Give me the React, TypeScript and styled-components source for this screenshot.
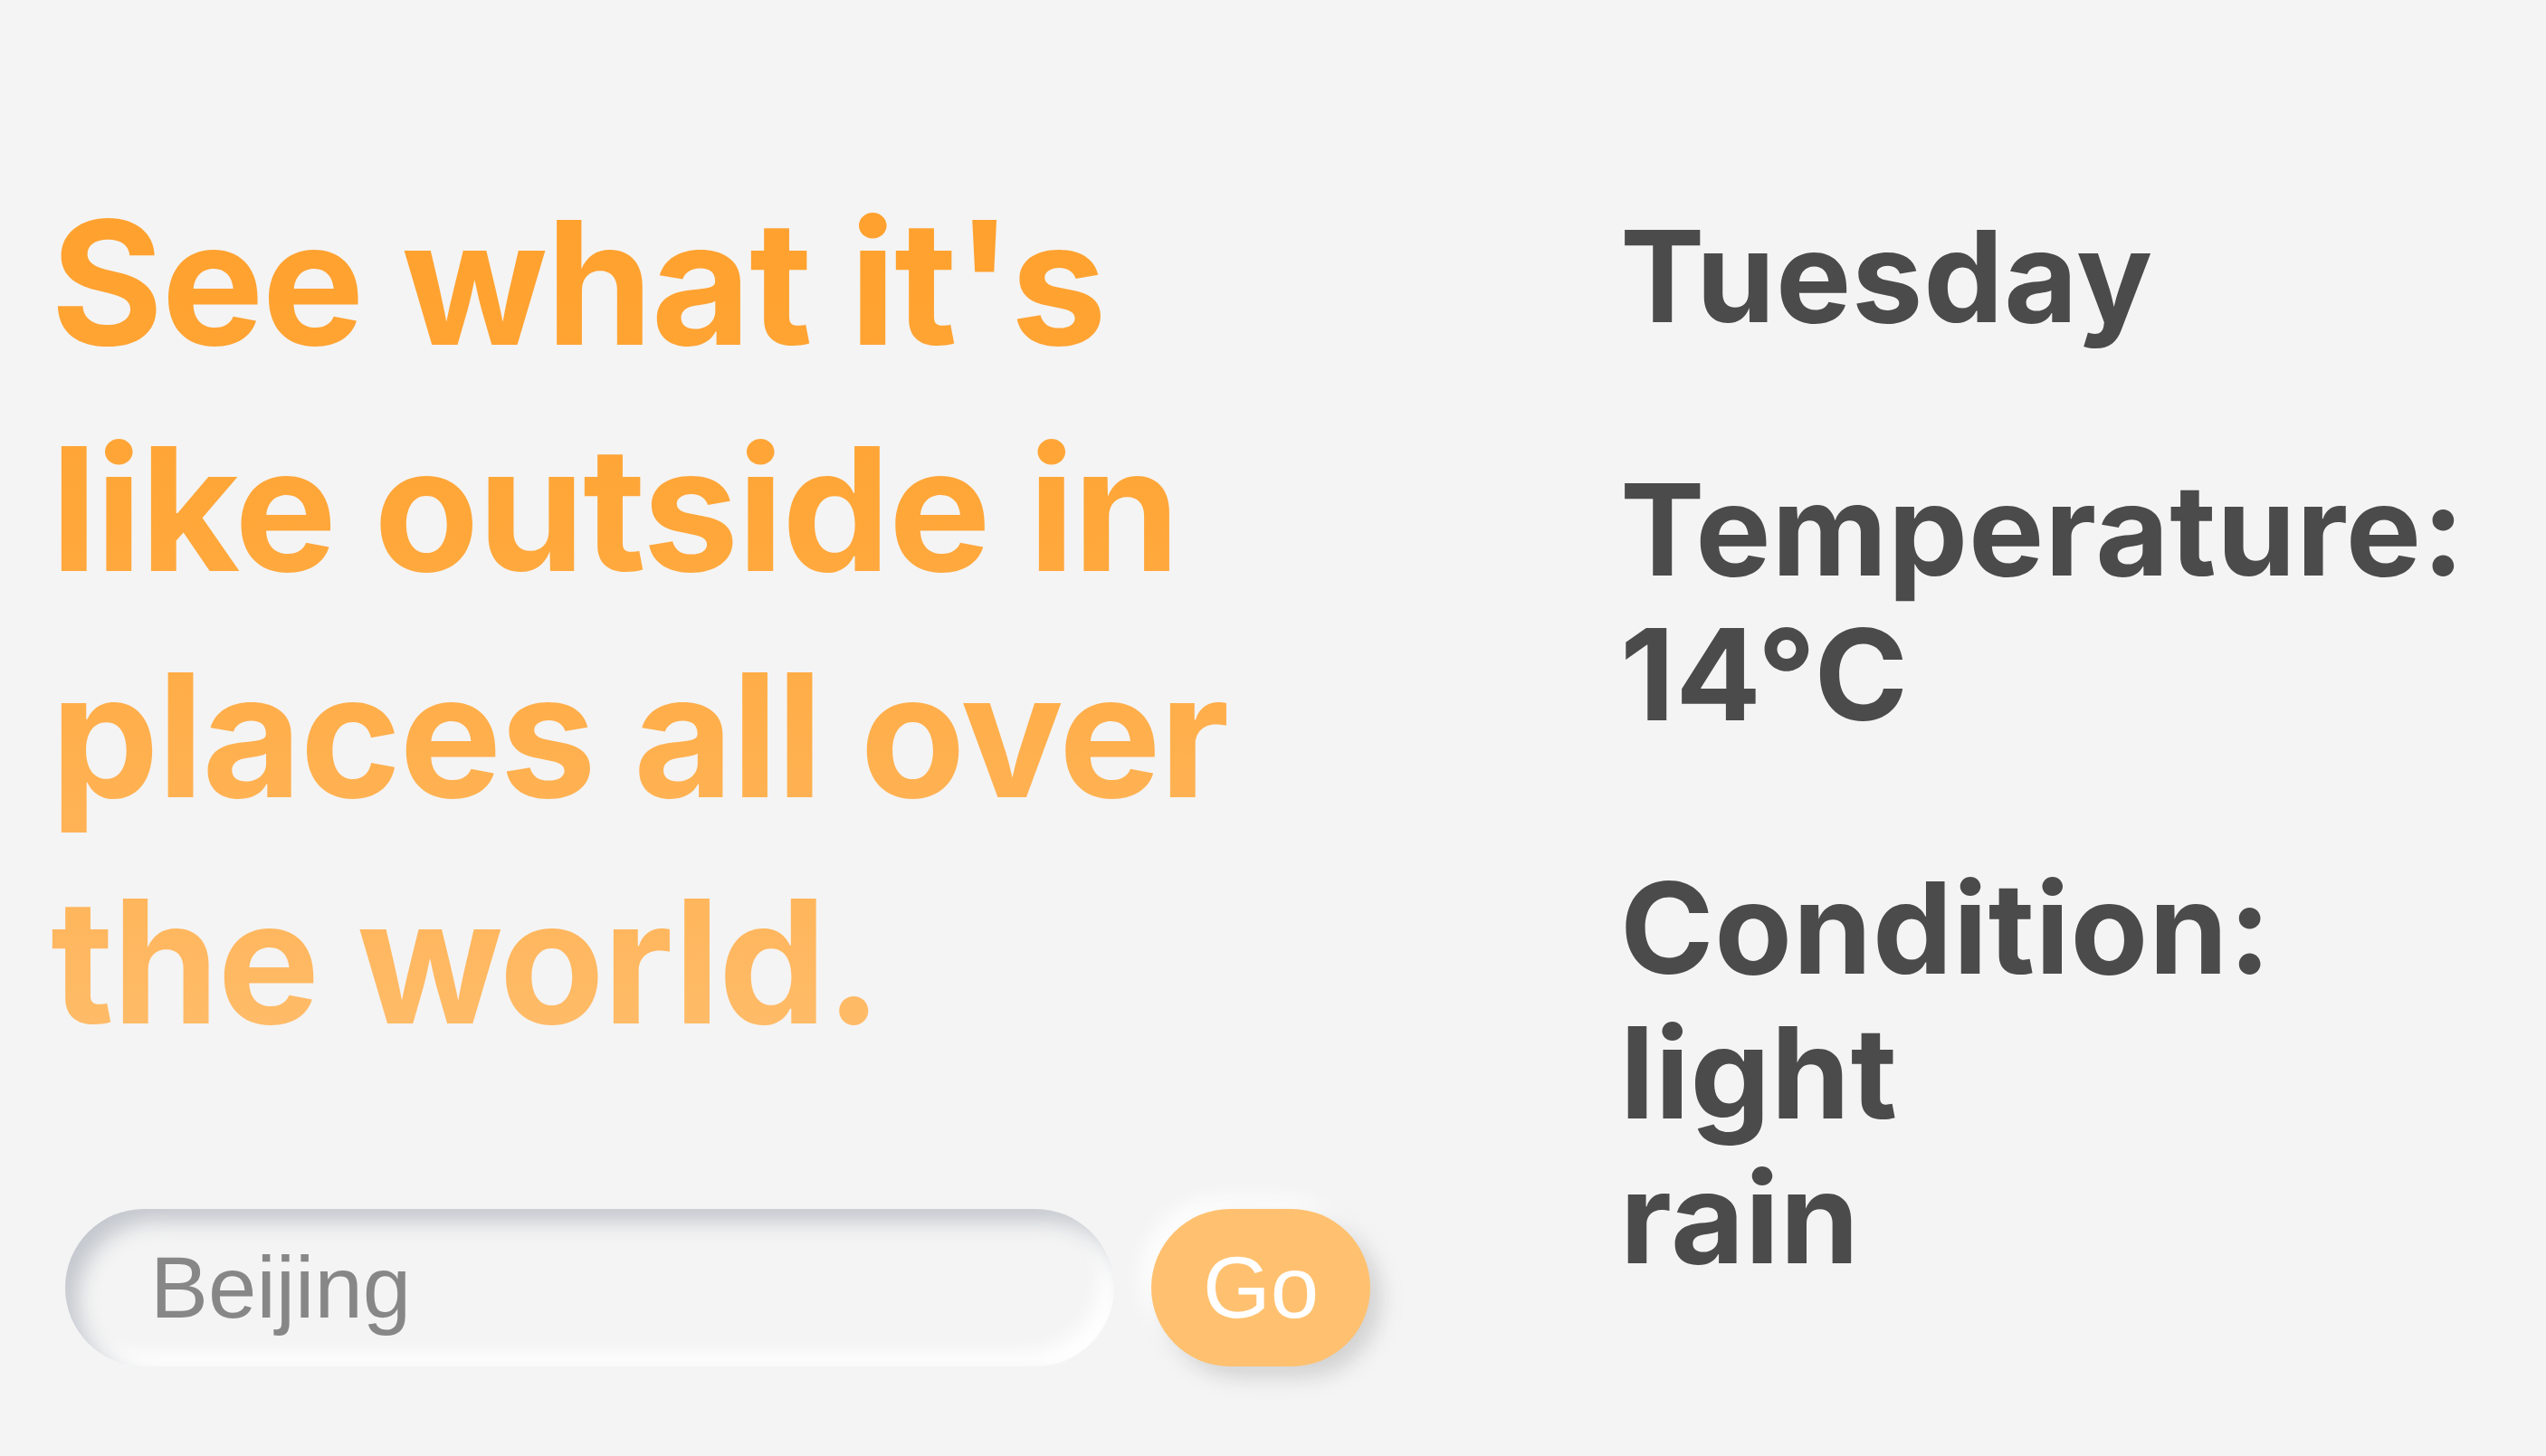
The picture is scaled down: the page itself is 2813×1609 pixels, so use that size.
import React, { useEffect, useRef } from "react";
import styled, { createGlobalStyle } from "styled-components";

const GlobalStyle = createGlobalStyle`
  html, body {
    margin: 0;
    padding: 0;
    background: #f4f4f4;
  }
  body {
    font-family: Inter, "Liberation Sans", sans-serif;
  }
  * { box-sizing: border-box; }
`;

const Page = styled.main`
  display: grid;
  grid-template-columns: 1790px 1fr;
  min-height: 1609px;
  background: #f4f4f4;
`;

const LeftColumn = styled.section`
  padding: 187px 0 0 56px;
  display: flex;
  flex-direction: column;
`;

const Headline = styled.h1`
  margin: 0;
  font-family: Inter, "Liberation Sans", sans-serif;
  font-weight: 700;
  font-size: 190px;
  line-height: 250px;
  letter-spacing: -2px;
  white-space: nowrap;
  background: linear-gradient(180deg, #ffa02c 0%, #ffa73a 40%, #ffbd6c 100%);
  -webkit-background-clip: text;
  background-clip: text;
  color: transparent;
  align-self: flex-start;
`;

const SearchForm = styled.form`
  display: flex;
  align-items: center;
  gap: 41px;
  margin: 149px 0 0 16px;
`;

const CityInput = styled.input`
  width: 1159px;
  height: 174px;
  border: none;
  outline: none;
  border-radius: 87px;
  background: #f4f4f4;
  padding: 0 0 0 94px;
  font-family: "Liberation Sans", Arial, sans-serif;
  font-size: 96px;
  color: #878787;
  caret-color: #666;
  box-shadow: inset 14px 14px 22px rgba(180, 186, 194, 0.75),
    inset -14px -14px 22px rgba(255, 255, 255, 1);
`;

const GoButton = styled.button`
  width: 242px;
  height: 174px;
  border: none;
  border-radius: 87px;
  background: #ffc170;
  color: #ffffff;
  font-family: "Liberation Sans", Arial, sans-serif;
  font-size: 96px;
  padding: 0;
  cursor: pointer;
  box-shadow: 12px 12px 22px rgba(150, 150, 150, 0.35),
    -12px -12px 22px rgba(255, 255, 255, 0.9);
`;

const RightColumn = styled.section`
  padding-top: 225px;
  display: flex;
  flex-direction: column;
  gap: 120px;
`;

const InfoBlock = styled.p`
  margin: 0;
  font-family: Inter, "Liberation Sans", sans-serif;
  font-weight: 700;
  font-size: 140px;
  line-height: 160px;
  letter-spacing: 0.8px;
  color: #4b4b4b;
  white-space: nowrap;
`;

const InfoLine = styled.span`
  display: block;
`;

const blocks: string[][] = [
  ["Tuesday"],
  ["Temperature:", "14°C"],
  ["Condition:", "light", "rain"],
];

export default function App() {
  const inputRef = useRef<HTMLInputElement>(null);
  useEffect(() => {
    const el = inputRef.current;
    if (el) {
      el.focus();
      el.setSelectionRange(el.value.length, el.value.length);
    }
  }, []);

  return (
    <>
      <GlobalStyle />
      <Page>
        <LeftColumn>
          <Headline>
            See what it's
            <br />
            like outside in
            <br />
            places all over
            <br />
            the world.
          </Headline>
          <SearchForm onSubmit={(e) => e.preventDefault()}>
            <CityInput ref={inputRef} type="text" defaultValue="Beijing" />
            <GoButton type="submit">Go</GoButton>
          </SearchForm>
        </LeftColumn>
        <RightColumn>
          {blocks.map((lines, i) => (
            <InfoBlock key={i}>
              {lines.map((line) => (
                <InfoLine key={line}>{line}</InfoLine>
              ))}
            </InfoBlock>
          ))}
        </RightColumn>
      </Page>
    </>
  );
}
